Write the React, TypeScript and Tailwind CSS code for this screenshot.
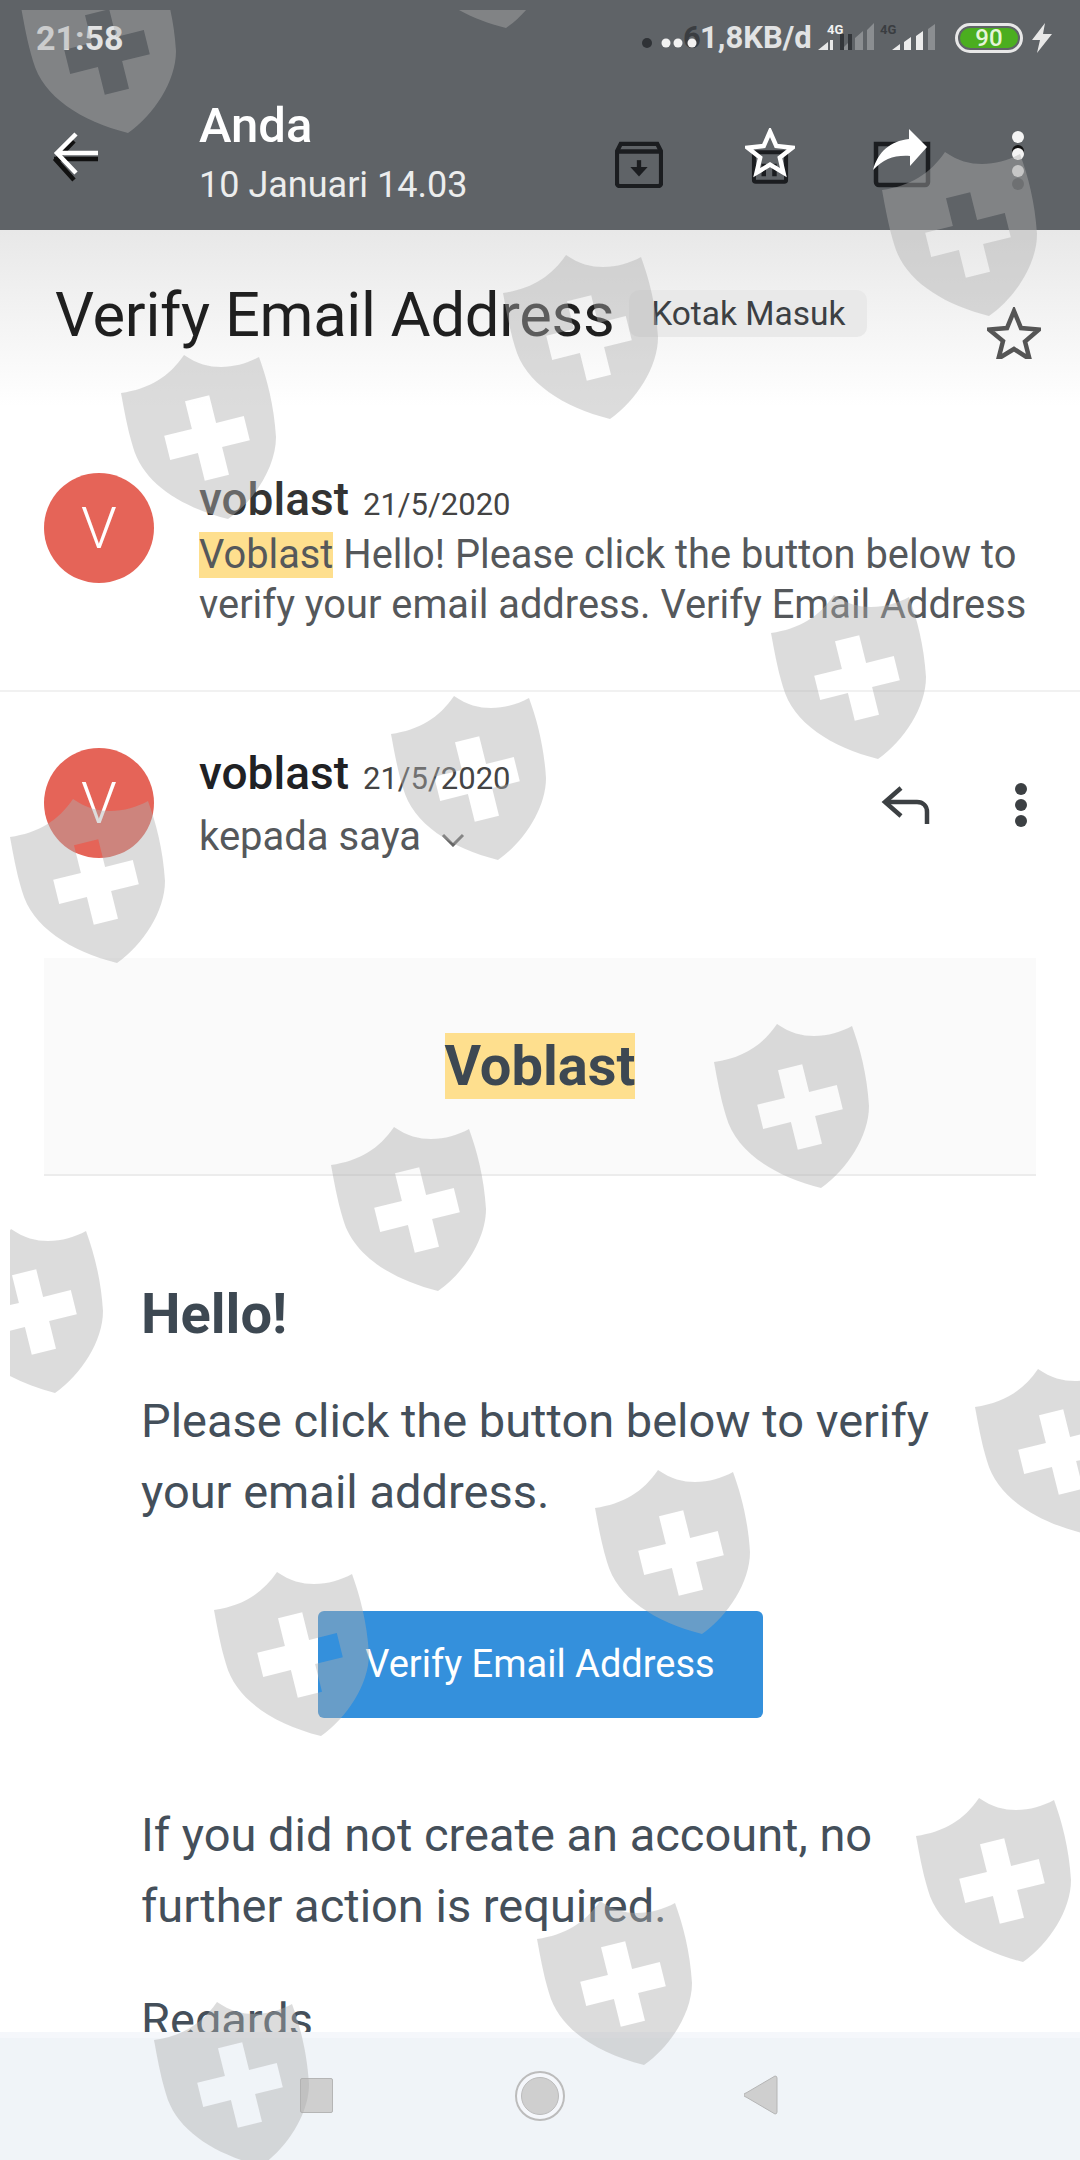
import React from 'react';

const shields = [
  [11, -41], [389, -146], [872, 142], [493, 245], [111, 345], [761, 585], [381, 686], [0, 789],
  [704, 1014], [321, 1117], [-62, 1219], [965, 1359], [585, 1460], [204, 1562], [906, 1788], [527, 1891], [144, 1992],
];

const Shield: React.FC<{ x: number; y: number }> = ({ x, y }) => (
  <svg className="absolute" style={{ left: x, top: y }} width="155" height="164" viewBox="0 0 155 164">
    <path
      fillRule="evenodd"
      fill="#aeaeae"
      fillOpacity="0.43"
      d="M0 38C28 34 48 22 63 0C76 9 88 12 100 12C114 12 127 8 138 2C146 24 153 50 155 82C155 112 133 146 107 164C60 152 22 128 12 92C6 72 3 54 0 38Z M64 46.200L88.200 40.200L95.100 67.900L122.800 61L128.800 85.200L101.100 92.100L108 119.800L83.800 125.800L76.900 98.100L49.200 105L43.200 80.800L70.900 73.900Z"
    />
  </svg>
);

const Avatar = () => (
  <div className="w-[110px] h-[110px] rounded-full bg-[#e56458] flex items-center justify-center text-white text-[58px] font-light shrink-0">
    V
  </div>
);

const StatusBar = () => (
  <div className="relative h-[62px] shrink-0 flex items-end pl-[36px] pb-[4px] text-[#e2e3e4] font-bold">
    <span className="text-[34px] leading-[40px]">21:58</span>
    <div className="ml-auto flex items-center h-[40px] pr-[28px]">
      <svg width="59" height="16" viewBox="0 0 59 16" className="relative mt-[10px]">
        <circle cx="8" cy="8" r="5" fill="#2f3236" />
        <circle cx="27" cy="8" r="4.500" fill="#f2f2f2" />
        <circle cx="39" cy="8" r="4.500" fill="#f2f2f2" />
        <circle cx="53" cy="8" r="4.500" fill="#f2f2f2" />
      </svg>
      <span className="text-[31px] leading-[40px] text-[#3a3d41] ml-[-15px] w-[17px]">6</span>
      <span className="text-[31px] leading-[40px] w-[113px] whitespace-nowrap">1,8KB/d</span>
      <svg width="124" height="36" viewBox="0 0 124 36" className="ml-[1px]">
        <text x="13" y="14" fontSize="13" fontWeight="700" fill="#f2f2f2" fontFamily="Roboto">4G</text>
        <text x="66" y="14" fontSize="13" fontWeight="700" fill="#3a3d41" fontFamily="Roboto">4G</text>
        <path d="M4 30l10-8v8z M16 20h3v10h-3z" fill="#e8e8e8" />
        <path d="M27 30l8-8v8zM41 30V18l8-7v19zM53 30V10l7-7v27z" fill="#8b8e91" />
        <path d="M26 14h4v16h-4zM34 14h4v16h-4z" fill="#33363a" />
        <path d="M78 30l8-6v6zM90 30v-8l7-5v13zM102 30V16l7-5v19z" fill="#ececec" />
        <path d="M114 30V9l7-5v26z" fill="#8b8e91" />
      </svg>
      <div className="ml-[17px] w-[68px] h-[30px] rounded-full border-[3px] border-[#e8e8e8] p-[2px]">
        <div className="h-full rounded-full bg-[#4bae1f] flex items-center justify-center text-[24px] font-medium text-[#e6f5d8] leading-none">
          90
        </div>
      </div>
      <svg width="20" height="30" viewBox="0 0 20 30" className="ml-[9px]">
        <path d="M13 0L0 17h8L5 30 20 11h-9z" fill="#e8e8e8" />
      </svg>
    </div>
  </div>
);

const ActionBar = () => (
  <div className="flex h-[168px] shrink-0 items-start">
    <div className="w-[199px] shrink-0 pl-[52px] pt-[70px]">
      <svg width="48" height="50" viewBox="0 0 48 50" fill="none" strokeWidth="4.500">
        <path d="M2 33h44M22 15L4 34l18 20" stroke="#111" transform="translate(0 -6)" />
        <path d="M4 23h42M24 4L5 23l19 20" stroke="#fff" transform="translate(0 -2)" />
      </svg>
    </div>
    <div className="flex-1 pt-[37px]">
      <div className="text-white text-[49px] leading-[54px] font-medium">Anda</div>
      <div className="text-[#eceded] text-[36px] leading-[42px] mt-[11px]">10 Januari 14.03</div>
    </div>
    <div className="flex items-start pt-[66px] pr-[54px]">
      <svg width="48" height="48" viewBox="0 0 50 50" className="mt-[12px]" fill="none" stroke="#1b1d20" strokeWidth="4.500">
        <path d="M2 12l4-8h38l4 8v33a3 3 0 0 1-3 3H5a3 3 0 0 1-3-3z" />
        <path d="M2 12h46" />
        <path d="M25 21v13" />
        <path d="M16 28h18L25 38z" fill="#1b1d20" stroke="none" />
      </svg>
      <svg width="50" height="60" viewBox="0 0 56 67" className="ml-[82px]">
        <path d="M10 27h36v31a2 2 0 0 1-2 2H12a2 2 0 0 1-2-2z" fill="none" stroke="#1b1d20" strokeWidth="4.500" />
        <path d="M21 40v14M33 40v14" stroke="#1b1d20" strokeWidth="5" />
        <path d="M28 4l7 16 18 2-14 11 4 17-15-9-15 9 4-17L3 22l18-2z" fill="none" stroke="#fff" strokeWidth="5" strokeLinejoin="miter" />
      </svg>
      <svg width="58" height="60" viewBox="0 0 58 60" className="ml-[78px]">
        <path d="M3 16h52v38a3 3 0 0 1-3 3H6a3 3 0 0 1-3-3z" fill="none" stroke="#1b1d20" strokeWidth="4.500" />
        <path d="M36 1l18 18-17 19V28C21 27 11 31 0 42 5 24 17 13 36 11z" fill="#fff" />
      </svg>
      <svg width="16" height="60" viewBox="0 0 16 60" className="ml-[79px] mt-[3px]">
        <circle cx="8" cy="20" r="6" fill="#111" />
        <circle cx="8" cy="53" r="6" fill="#3f4246" />
        <circle cx="8" cy="6" r="6" fill="#f4f4f4" />
        <circle cx="8" cy="23" r="6" fill="#f4f4f4" />
        <circle cx="8" cy="40" r="6" fill="#d8d8d8" />
      </svg>
    </div>
  </div>
);

const Star = () => (
  <svg width="54" height="52" viewBox="0 0 54 52" fill="none" stroke="#555" strokeWidth="4.500">
    <path d="M27 4l7 17 18 1.500-14 12 4.500 17.500L27 42l-15.500 9.500L16 34 2 22.500 20 21z" />
  </svg>
);

const App: React.FC = () => {
  return (
    <div className="relative w-[1080px] h-[2160px] overflow-hidden bg-white flex flex-col font-['Roboto',sans-serif]">
      <div className="h-[230px] shrink-0 bg-[#5f6367] flex flex-col">
        <StatusBar />
        <ActionBar />
      </div>

      <div className="flex-1 min-h-0 overflow-hidden">
        {/* subject */}
        <div className="h-[176px] bg-gradient-to-b from-[#e8e8e8] to-white flex items-start pl-[55px] pr-[40px] pt-[48px]">
          <h1 className="text-[61.500px] leading-[74px] text-[#1f1f1f] whitespace-nowrap tracking-[-0.3px]">Verify Email Address</h1>
          <span className="ml-[15px] mt-[12px] h-[47px] w-[238px] rounded-[10px] bg-[#e9e9e9] text-[#3c4043] text-[33.500px] leading-[47px] text-center">
            Kotak Masuk
          </span>
          <div className="ml-auto mt-[29px] mr-[-1px]">
            <Star />
          </div>
        </div>

        {/* collapsed message */}
        <div className="h-[286px] border-b-2 border-[#f1f1f1] flex pl-[44px] pr-[40px] pt-[67px]">
          <div>
            <Avatar />
          </div>
          <div className="ml-[45px] text-[39.800px] leading-[50px] text-[#55585b]">
            <div className="flex items-baseline h-[44px] leading-[44px] mt-[4px]">
              <span className="text-[46px] font-medium text-[#333]">voblast</span>
              <span className="ml-[14px] text-[31px] text-[#444]">21/5/2020</span>
            </div>
            <div className="whitespace-nowrap h-[50px] mt-[9px]">
              <span className="bg-[#fedf8e] inline-block leading-[46px]">Voblast</span> Hello! Please click the button below to
            </div>
            <div className="whitespace-nowrap">verify your email address. Verify Email Address</div>
          </div>
        </div>

        {/* open message header */}
        <div className="h-[266px] flex pl-[44px] pr-[52px] pt-[56px]">
          <Avatar />
          <div className="ml-[45px]">
            <div className="flex items-baseline h-[44px] leading-[44px] mt-[3px]">
              <span className="text-[46px] font-medium text-[#202124]">voblast</span>
              <span className="ml-[14px] text-[31px] text-[#444]">21/5/2020</span>
            </div>
            <div className="flex items-center mt-[20px] text-[40px] leading-[44px] text-[#55585b]">
              kepada saya
              <svg width="24" height="14" viewBox="0 0 24 14" className="ml-[20px] mt-[6px]" fill="none" stroke="#666" strokeWidth="3">
                <path d="M2 2l10 10L22 2" />
              </svg>
            </div>
          </div>
          <div className="ml-auto flex items-start mt-[38px]">
            <svg width="50" height="38" viewBox="0 0 50 38" fill="none" stroke="#3c4043" strokeWidth="4.500">
              <path d="M20 2L4 16l16 14" />
              <path d="M4 16h32c6 0 10 4 10 10v12" />
            </svg>
            <svg width="14" height="44" viewBox="0 0 14 44" className="ml-[83px] mt-[-3px]" fill="#3c4043">
              <circle cx="7" cy="6" r="6" />
              <circle cx="7" cy="22" r="6" />
              <circle cx="7" cy="38" r="6" />
            </svg>
          </div>
        </div>

        {/* email body */}
        <div className="px-[44px]">
          <div className="h-[218px] bg-[#fafafa] border-b-2 border-[#ececec] flex items-center justify-center">
            <span className="bg-[#fedf8e] text-[#3d4852] font-bold text-[56px] leading-[66px]">Voblast</span>
          </div>
          <div className="px-[97px] text-[#444f5a] text-[47px] leading-[71px]">
            <h2 className="mt-[106px] text-[#3d4852] font-bold text-[56px] leading-[64px]">Hello!</h2>
            <p className="mt-[39px]">
              Please click the button below to verify<br />your email address.
            </p>
            <div className="flex justify-center mt-[84px]">
              <div className="w-[445px] h-[107px] rounded-[6px] bg-[#3490dc] text-white text-[38px] flex items-center justify-center">
                Verify Email Address
              </div>
            </div>
            <p className="mt-[81px]">
              If you did not create an account, no<br />further action is required.
            </p>
            <p className="mt-[43px]">Regards</p>
          </div>
        </div>
      </div>

      {/* nav bar */}
      <div className="h-[128px] shrink-0 bg-[#f0f4f8] border-t-[6px] border-[#f5f7fb] flex items-start pt-[37px] pl-[300px]">
        <div className="w-[33px] h-[35px] mt-[3px] bg-[#cfcfcf] border border-[#b5b5b5] rounded-[2px]" />
        <div className="ml-[182px] mt-[-4px] w-[50px] h-[50px] rounded-full border-2 border-[#bcbcbc] bg-[#f5f7fb] flex items-center justify-center">
          <div className="w-[38px] h-[38px] rounded-full bg-[#cfcfcf] border border-[#bcbcbc]" />
        </div>
        <svg width="34" height="40" viewBox="0 0 34 40" className="ml-[179px] mt-[0px]">
          <path d="M31 1a2 2 0 0 1 2 2v34a2 2 0 0 1-2 2L2 22a2 2 0 0 1 0-4z" fill="#cfcfcf" stroke="#b5b5b5" />
        </svg>
      </div>

      {/* watermark layer */}
      <div className="absolute left-[10px] top-[10px] right-0 bottom-0 overflow-hidden pointer-events-none">
        {shields.map(([x, y], i) => (
          <Shield key={i} x={x} y={y} />
        ))}
      </div>
    </div>
  );
};

export default App;
